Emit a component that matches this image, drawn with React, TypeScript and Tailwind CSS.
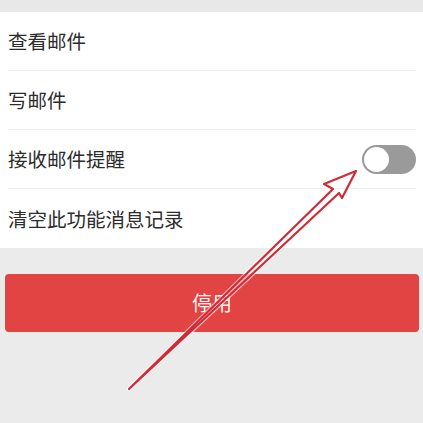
import React from "react";

const rows = ["查看邮件", "写邮件", "接收邮件提醒", "清空此功能消息记录"];

export default function App() {
  return (
    <div
      className="relative w-[423px] h-[423px] overflow-hidden bg-[#ebebeb]"
      style={{ fontFamily: '"Noto Sans CJK SC", "Noto Sans", sans-serif' }}
    >
      <div className="h-[12px] bg-[#e8e8e8]" />
      <div className="bg-white">
        {rows.map((t, i) => (
          <div key={t} className="pl-[8px] pr-[7px]">
            <div
              className={
                "h-[59px] flex items-center justify-between " +
                (i < rows.length - 1 ? "border-b border-[#eeeeee]" : "")
              }
            >
              <span className="text-[19.5px] leading-none text-[#2c2c2c]">{t}</span>
              {i === 2 && (
                <div className="w-[54px] h-[29px] rounded-full bg-[#9a9a9a] flex items-center p-[2px]">
                  <div className="w-[25px] h-[25px] rounded-full bg-white" />
                </div>
              )}
            </div>
          </div>
        ))}
      </div>
      <div className="pt-[26px] pl-[5px] pr-[4px]">
        <div className="h-[58px] rounded-[4px] bg-[#e24343] flex items-center justify-center">
          <span className="text-[20px] leading-none text-[#fff4f4]">停用</span>
        </div>
      </div>
      <svg
        className="absolute inset-0 pointer-events-none"
        width="423"
        height="423"
        viewBox="0 0 423 423"
      >
        <polygon
          points="356,171 324,184 333,189 129,389 339,193 342,198"
          fill="none"
          stroke="#ffffff"
          strokeOpacity="0.6"
          strokeWidth="4.5"
          strokeLinejoin="round"
        />
        <polygon
          points="356,171 324,184 333,189 129,389 339,193 342,198"
          fill="none"
          stroke="#d22a35"
          strokeWidth="2.2"
          strokeLinejoin="round"
        />
      </svg>
    </div>
  );
}
